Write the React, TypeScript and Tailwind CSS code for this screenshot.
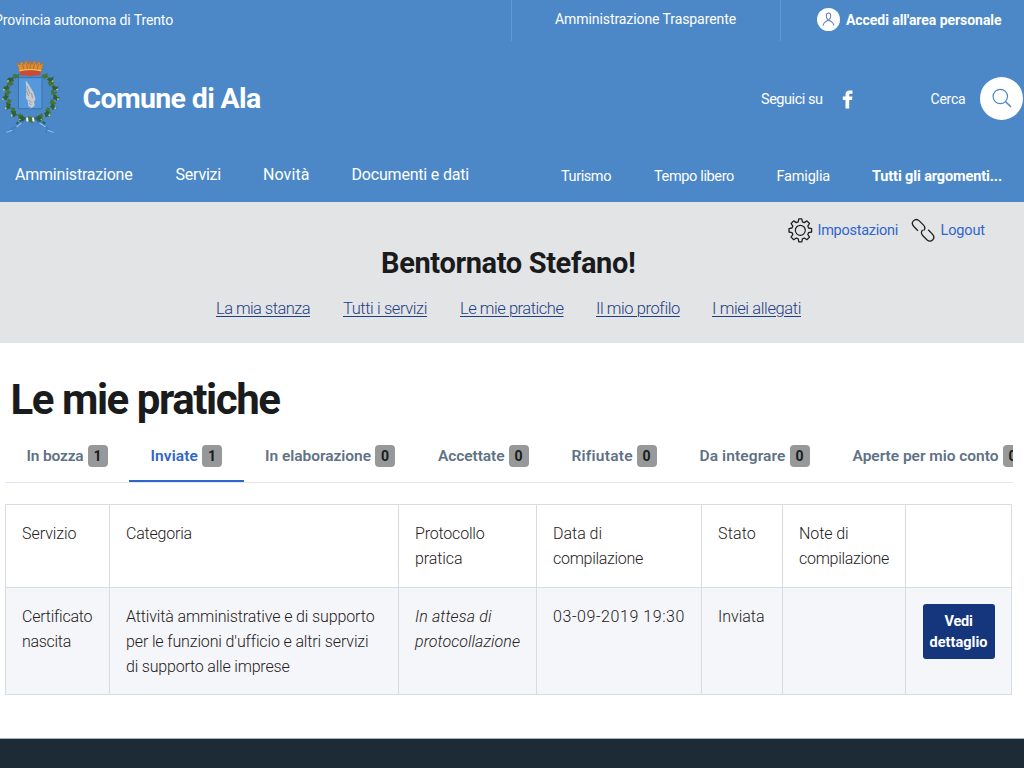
import { useLayoutEffect, useRef, useState } from "react";
import type { ReactNode } from "react";

/* Text line whose tracking is tuned so that it fills the width of its box. */
function Fit({ children, className = "", underline = false }: { children: ReactNode; className?: string; underline?: boolean }) {
  const box = useRef<HTMLSpanElement>(null);
  const [tracking, setTracking] = useState(0);
  useLayoutEffect(() => {
    const el = box.current;
    const inner = el?.firstElementChild as HTMLElement | null;
    if (!el || !inner) return;
    const measure = () => {
      inner.style.letterSpacing = "0px";
      const natural = inner.getBoundingClientRect().width;
      const count = (inner.textContent || "").length;
      const next = (el.getBoundingClientRect().width - natural) / count;
      inner.style.letterSpacing = `${next}px`;
      setTracking(next);
    };
    measure();
    document.fonts.ready.then(measure);
  }, []);
  return (
    <span ref={box} className={`block shrink-0 whitespace-nowrap ${className}`}>
      <span className={underline ? "inline-block underline decoration-1 underline-offset-2" : "inline-block"} style={{ letterSpacing: `${tracking}px` }}>{children}</span>
    </span>
  );
}

const leaves = Array.from({ length: 13 }, (_, i) => {
  const deg = -50 + i * 11.2;
  const a = (deg * Math.PI) / 180;
  return { dx: Math.cos(a) * 24 + (i % 2 ? 1.2 : -1), y: 36 + Math.sin(a) * 24.5, deg };
});

function Emblem() {
  return (
    <svg className="h-[80px] w-[60px] shrink-0" viewBox="0.500 0 60 80">
      {[-1, 1].map((s) => (
        <g key={s}>
          {leaves.map((l, i) => (
            <g key={i} transform={`translate(${31 + s * l.dx} ${l.y})`}>
              <path d="M-3.600 0l2.200-2.400 1.700.8 2.900-1.500-.6 2.700.8 1.900-2.900.3-1.500 1.300-.8-2z" fill={i % 2 ? "#2f5f36" : "#447538"} transform={`rotate(${s * (l.deg + 40)})`} />
              {i % 2 === 1 && <circle cx={s * 2.4} cy="1.500" r="0.900" fill="#cfcf72" />}
            </g>
          ))}
        </g>
      ))}
      <path d="M20 13L17.500 3.500l3 2.500 1-4 3 3.500L26.500 1.500l2.500 4L30.500.8l2 4.700L35 1.500l2 4L40 2l1 4 3-2.500L41.500 13z" fill="#dc9036" stroke="#b2692f" strokeWidth=".6" />
      <path d="M23 5l2 8m2-9l1.500 9M30.700 3v10M35 4l-1.500 9M39 5l-2 8" stroke="#b8582d" strokeWidth=".8" />
      <path d="M20.500 12.500q10-2.500 20.500 0v3.300q-10 2.200-20.500 0z" fill="#cc4a33" />
      <path d="M20 11.700q11-2.400 21.500 0" fill="none" stroke="#efc65b" strokeWidth="1.200" />
      <path d="M19 18.700h23.500v31H32.500l-1.500 1-1.500-1H19z" fill="#5599dc" stroke="#376fa8" strokeWidth=".9" />
      <path d="M26.200 22l1.300.8 6.500 10.700 2 6.500-1.500 3 .8 3.500-3 2.500-3.500-2-.5-5-2-3 .6-8z" fill="#c7cbd0" />
      <path d="M27.500 27l3 8m-3.500-3l2 5m3-3l1 5m-4 2l3 2.500m-2.500 1l2.500 1.500" stroke="#858c94" strokeWidth=".8" fill="none" />
      <path d="M27 59q-6 2-10 6m18-6q6 2 11 6" stroke="#2f5f4c" strokeWidth="2" fill="none" strokeDasharray="3 1.500" />
      <path d="M27 60l-8 7-6 2-5 5m27-14l8 7 5 2 5 5M13 69l1 4.500m34-4.500l-1.500 4.500" stroke="#3f79bf" strokeWidth="1.300" fill="none" />
      <path d="M22 64l-5 4m23-4l6 4M13 71l-6 2.500m41-2.500l6 2.500" stroke="#86c0ee" strokeWidth="1.200" fill="none" />
      <path d="M27.500 58.500l.5 4m5.500-4l.5 4" stroke="#f2f6fa" strokeWidth="2" />
    </svg>
  );
}

function GearIcon() {
  return (
    <svg className="h-[25px] w-[25px] shrink-0" viewBox="0 0 25 25" fill="none" stroke="#1d1f21" strokeWidth="1.300" strokeLinejoin="round">
      <path d="M10.800.8h3l.6 3 1.900.8 2.600-1.700 2.600 2.600-1.700 2.600.8 1.900 3 .6v3.400l-3 .6-.8 1.900 1.700 2.600-2.600 2.600-2.600-1.700-1.900.8-.6 3h-3l-.6-3-1.900-.8-2.600 1.700-2.600-2.600 1.700-2.600-.8-1.900-3-.6v-3.400l3-.6.8-1.900-1.700-2.600 2.600-2.600 2.600 1.700 1.900-.8z" />
      <circle cx="12.300" cy="12.300" r="5" strokeWidth="1.200" />
    </svg>
  );
}

function LinkIcon() {
  return (
    <svg className="h-[25px] w-[25px] shrink-0" viewBox="0 0 25 25" fill="none" stroke="#1d1f21" strokeWidth="1.300">
      <path d="M7 12.700L2.800 8.500C1 6.500.8 4.500 2.400 2.900S6.500 1.200 8.300 2.900l4 4c1.900 1.900 2 4 .3 5.700M17.200 11.800l4.200 4.300c1.800 2 2 4 .4 5.600s-4.100 1.700-5.900 0l-4-4c-1.900-1.900-2-4-.3-5.700" />
    </svg>
  );
}

function Badge({ children }: { children: ReactNode }) {
  return <span className="ml-1 flex h-[22px] w-[20px] shrink-0 items-center justify-center rounded-[4px] bg-[#979899] pt-px text-[14px] font-bold text-[#1a1b1c]">{children}</span>;
}

function Tab({ label, width, count, active = false }: { label: string; width: string; count: number; active?: boolean }) {
  return (
    <div className={`flex h-[38px] shrink-0 items-start border-b-[3px] px-[21.500px] ${active ? "border-[#2f66cb] text-[#2f66cb]" : "border-transparent text-[#5f7285]"}`}>
      <Fit className={`text-[15.500px] leading-[22px] font-semibold ${width}`}>{label}</Fit>
      <Badge>{count}</Badge>
    </div>
  );
}

const cell = "border border-[#d6dce3] pt-[15.500px] pl-[16px] align-top text-[16px] leading-[25px] font-[350] text-[#1f2022]";

export default function App() {
  return (
    <div className="h-[768px] w-[1024px] overflow-hidden bg-white font-['Roboto','Liberation_Sans',sans-serif]">
      <header className="h-[202px] bg-[#4c88c7] text-white">
        <div className="flex h-[41px] text-[14px] leading-[20px]">
          <Fit className="-ml-[6px] mt-[10px] w-[179px]">Provincia autonoma di Trento</Fit>
          <div className="ml-[338px] w-[270px] border-x border-[#5f98d4] pt-[9px] pl-[43px]">
            <Fit className="w-[181px]">Amministrazione Trasparente</Fit>
          </div>
          <div className="flex pl-[36px]">
            <svg className="mt-[8px] h-[23px] w-[23px]" viewBox="0 0 23 23">
              <circle cx="11.500" cy="11.500" r="11.500" fill="white" />
              <path d="M11.500 5c-2.800 0-2.700 4.800-.7 6.500.5.400 1 .400 1.500 0C14.300 9.800 14.300 5 11.500 5zM6 17.500q1.500-4 5.500-5.500 4 1.500 5.500 5.500" fill="none" stroke="#6a80b3" strokeWidth="1.100" />
            </svg>
            <Fit className="mt-[10px] ml-[6px] w-[155.500px] font-bold">Accedi all'area personale</Fit>
          </div>
        </div>
        <div className="flex h-[117px] pt-[18px]">
          <Emblem />
          <Fit className="mt-[21.500px] ml-[22.500px] w-[178px] text-[28.500px] leading-[36px] font-bold">Comune di Ala</Fit>
          <Fit className="mt-[31px] ml-[500.500px] w-[61.500px] text-[14.500px] leading-[20px]">Seguici su</Fit>
          <svg className="mt-[31px] ml-[19px] h-[19px] w-[11px]" viewBox="0 0 11 19">
            <path d="M3.500 18.500V10H.8V6.500h2.700V4.700C3.500 1.700 5 .5 7.500.5h3v3.300h-2c-1 0-1.300.4-1.300 1.300v1.400h3.200L10 10H7.200v8.500z" fill="white" />
          </svg>
          <Fit className="mt-[30px] ml-[78px] w-[35px] text-[14px] leading-[20px]">Cerca</Fit>
          <svg className="mt-[18px] ml-[14.500px] h-[43px] w-[43px] shrink-0" viewBox="0 0 43 43">
            <circle cx="21.500" cy="21.500" r="21.500" fill="white" />
            <circle cx="20.300" cy="19.500" r="7.200" fill="none" stroke="#4c88c7" strokeWidth="1.200" />
            <path d="M25.500 24.500l5.500 5.500" stroke="#4c88c7" strokeWidth="1.500" />
          </svg>
        </div>
        <nav className="flex pl-[15px] text-[16px] leading-[24px]">
          <Fit className="mt-[5px] w-[117.500px]">Amministrazione</Fit>
          <Fit className="mt-[5px] ml-[43px] w-[45.500px]">Servizi</Fit>
          <Fit className="mt-[5px] ml-[42px] w-[46.500px]">Novità</Fit>
          <Fit className="mt-[5px] ml-[42px] w-[117.500px]">Documenti e dati</Fit>
          <div className="mt-[8.500px] ml-[92px] flex text-[14.500px] leading-[20px]">
            <Fit className="w-[50px]">Turismo</Fit>
            <Fit className="ml-[43px] w-[80px]">Tempo libero</Fit>
            <Fit className="ml-[42.500px] w-[53.500px]">Famiglia</Fit>
            <Fit className="ml-[42px] w-[130px] font-bold">Tutti gli argomenti...</Fit>
          </div>
        </nav>
      </header>

      <section className="h-[141px] bg-[#e3e4e6]">
        <div className="flex h-[42px] pt-[15.500px] pl-[787.500px] text-[14.500px] leading-[20px] text-[#2f66cb]">
          <GearIcon />
          <Fit className="mt-[3px] ml-[5px] w-[80.500px]">Impostazioni</Fit>
          <span className="ml-[13px]"><LinkIcon /></span>
          <Fit className="mt-[3px] ml-[4.500px] w-[44.500px]">Logout</Fit>
        </div>
        <h2 className="flex h-[37.500px] pt-[0.500px] pl-[381px] text-[29px] leading-[36px] font-bold text-[#1a1b1c]">
          <Fit className="w-[254.500px]">Bentornato Stefano!</Fit>
        </h2>
        <div className="mt-[16px] flex pl-[216px] text-[16.500px] leading-[22px] font-[350] text-[#1e3f85]">
          {[
            ["La mia stanza", "w-[94px]"],
            ["Tutti i servizi", "w-[84px] ml-[33px]"],
            ["Le mie pratiche", "w-[103.500px] ml-[33px]"],
            ["Il mio profilo", "w-[83.500px] ml-[32.500px]"],
            ["I miei allegati", "w-[89px] ml-[32.500px]"],
          ].map(([label, width]) => (
            <Fit key={label} underline className={width}>{label}</Fit>
          ))}
        </div>
      </section>

      <main className="h-[395px] pt-[30px]">
        <h1 className="flex h-[53px] pl-[10.500px] text-[42px] leading-[54px] font-bold text-[#1a1b1c]">
          <Fit className="w-[269px]">Le mie pratiche</Fit>
        </h1>
        <div className="mt-[18.500px] ml-[5px] flex h-[38.500px] w-[1008px] overflow-hidden border-b-[1.500px] border-[#e3e7f3]">
          <Tab label="In bozza" width="w-[57px]" count={1} />
          <Tab label="Inviate" width="w-[47.500px]" count={1} active />
          <Tab label="In elaborazione" width="w-[106px]" count={0} />
          <Tab label="Accettate" width="w-[66.500px]" count={0} />
          <Tab label="Rifiutate" width="w-[61px]" count={0} />
          <Tab label="Da integrare" width="w-[86px]" count={0} />
          <Tab label="Aperte per mio conto" width="w-[146px]" count={0} />
        </div>
        <table className="mt-[21px] ml-[5px] w-[1007px] table-fixed border-collapse">
          <colgroup>
            <col className="w-[104px]" />
            <col className="w-[289px]" />
            <col className="w-[138px]" />
            <col className="w-[165px]" />
            <col className="w-[81px]" />
            <col className="w-[123px]" />
            <col className="w-[106px]" />
          </colgroup>
          <tbody>
            <tr className="h-[83px]">
              <td className={cell}><Fit className="w-[54.500px]">Servizio</Fit></td>
              <td className={cell}><Fit className="w-[66px]">Categoria</Fit></td>
              <td className={cell}><Fit className="w-[69.500px]">Protocollo</Fit><Fit className="w-[47.500px]">pratica</Fit></td>
              <td className={cell}><Fit className="w-[49px]">Data di</Fit><Fit className="w-[90px]">compilazione</Fit></td>
              <td className={cell}><Fit className="w-[38px]">Stato</Fit></td>
              <td className={cell}><Fit className="w-[49.500px]">Note di</Fit><Fit className="w-[90px]">compilazione</Fit></td>
              <td className={cell} />
            </tr>
            <tr className="h-[107px] bg-[#f5f6f9]">
              <td className={cell}><Fit className="w-[70px]">Certificato</Fit><Fit className="w-[49px]">nascita</Fit></td>
              <td className={cell}>
                <Fit className="w-[248.500px]">Attività amministrative e di supporto</Fit>
                <Fit className="w-[241.500px]">per le funzioni d'ufficio e altri servizi</Fit>
                <Fit className="w-[163.500px]">di supporto alle imprese</Fit>
              </td>
              <td className={`${cell} italic`}><Fit className="w-[76.500px]">In attesa di</Fit><Fit className="w-[105px]">protocollazione</Fit></td>
              <td className={cell}><Fit className="w-[132px]">03-09-2019 19:30</Fit></td>
              <td className={cell}><Fit className="w-[46.500px]">Inviata</Fit></td>
              <td className={cell} />
              <td className={cell}>
                <button className="mt-[0.500px] ml-[0.500px] flex h-[55px] w-[72px] flex-col items-center rounded-[3px] bg-[#15367c] pt-[8px] text-[14.500px] leading-[20.500px] font-bold text-white">
                  <Fit className="w-[28px]">Vedi</Fit>
                  <Fit className="w-[58px]">dettaglio</Fit>
                </button>
              </td>
            </tr>
          </tbody>
        </table>
      </main>
      <footer className="h-[30px] border-t border-[#a9b3b9] bg-[#1c2b35]" />
    </div>
  );
}
